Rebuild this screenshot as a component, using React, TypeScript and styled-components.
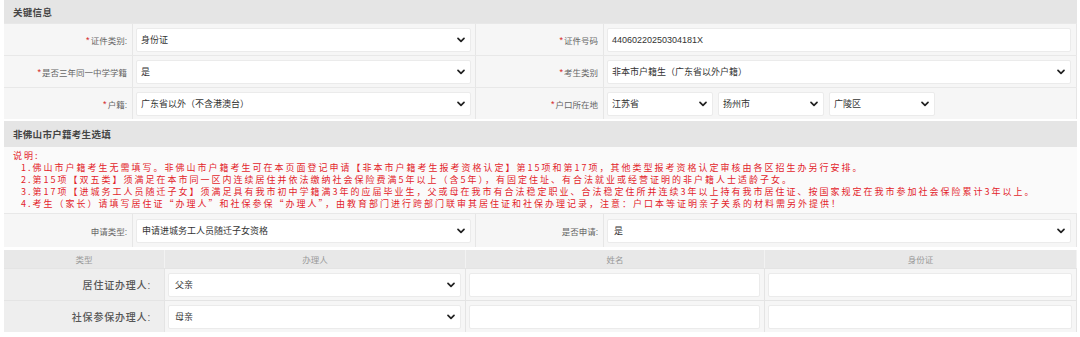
import React from "react";
import styled, { createGlobalStyle } from "styled-components";

const Global = createGlobalStyle`
  html, body { margin: 0; padding: 0; background: #ffffff; }
  body {
    font-family: "Liberation Sans", "Noto Sans CJK SC", sans-serif;
    color: #333;
  }
`;

const Page = styled.div`
  width: 1073px;
  margin-left: 4px;
  display: flex;
  flex-direction: column;
`;

const SectionHeader = styled.div<{ $top?: number; $h?: number }>`
  height: ${(p) => p.$h ?? 23}px;
  margin-top: ${(p) => p.$top ?? 0}px;
  background: #e5e5e5;
  display: flex;
  align-items: center;
  padding-left: 9px;
  font-size: 9.5px;
  font-weight: 700;
  color: #444;
  letter-spacing: 0.3px;
`;

const FormRow = styled.div<{ $h?: number }>`
  display: grid;
  grid-template-columns: 129px 343px 128px 1fr;
  box-sizing: border-box;
  height: ${(p) => p.$h ?? 32}px;
  background: #f6f6f6;
  border-top: 1px solid #e8e8e8;
`;

const LabelCell = styled.div`
  display: flex;
  align-items: center;
  justify-content: flex-end;
  padding-right: 5px;
  font-size: 8.5px;
  color: #666;
  border-right: 1px solid #e6e6e6;
  white-space: nowrap;
`;

const Req = styled.span`
  color: #d41c1c;
  font-size: 9px;
  margin-right: 1px;
`;

const FieldCell = styled.div<{ $pr?: number }>`
  display: flex;
  align-items: center;
  gap: 5px;
  padding: 0 ${(p) => p.$pr ?? 4}px 0 3px;
  border-right: 1px solid #e6e6e6;
`;

const Box = styled.div<{ $w?: number; $pl?: number }>`
  height: 24px;
  box-sizing: border-box;
  ${(p) => (p.$w ? `width: ${p.$w}px; flex: none;` : "flex: 1;")}
  background: #ffffff;
  border: 1px solid #ebebeb;
  border-radius: 2px;
  display: flex;
  align-items: center;
  padding: 0 5px 0 ${(p) => p.$pl ?? 4}px;
  font-size: 9px;
  color: #333;
  white-space: nowrap;
  overflow: hidden;
`;

const BoxText = styled.span`
  flex: 1;
`;

const Chevron = () => (
  <svg width="8" height="6" viewBox="0 0 8 6" style={{ flex: "none" }}>
    <polyline points="1,1.3 4,4.3 7,1.3" fill="none" stroke="#222" strokeWidth="1.7" strokeLinecap="round" strokeLinejoin="round" />
  </svg>
);

const Select: React.FC<{ value: string; w?: number; pl?: number }> = ({ value, w, pl }) => (
  <Box $w={w} $pl={pl}>
    <BoxText>{value}</BoxText>
    <Chevron />
  </Box>
);

const Notes = styled.div`
  height: 66px;
  box-sizing: border-box;
  padding: 3px 0 0 9px;
  background: #fafafa;
  color: #e3242b;
  font-family: "Noto Sans CJK SC", sans-serif;
  font-size: 9px;
  line-height: 12px;
  letter-spacing: 2px;
  white-space: nowrap;
`;

const NoteLine = styled.div<{ $indent?: boolean }>`
  padding-left: ${(p) => (p.$indent ? 8 : 0)}px;
`;

const Gap = styled.div`
  height: 3px;
  background: #ffffff;
`;

const Table = styled.div`
  display: grid;
  grid-template-columns: 161px 301px 299px 1fr;
`;

const TH = styled.div`
  height: 18px;
  background: #e8e8e8;
  display: flex;
  align-items: center;
  justify-content: center;
  font-size: 8.5px;
  color: #999;
  border-right: 1px solid #f2f2f2;
`;

const TLabel = styled.div`
  box-sizing: border-box;
  height: 32px;
  background: #eeeeee;
  border-top: 1px solid #e4e4e4;
  display: flex;
  align-items: center;
  justify-content: flex-end;
  padding-right: 13px;
  font-size: 10px;
  font-weight: 500;
  color: #555;
  letter-spacing: 0.8px;
  border-right: 1px solid #e4e4e4;
`;

const TCell = styled.div`
  box-sizing: border-box;
  height: 32px;
  background: #f6f6f6;
  border-top: 1px solid #e4e4e4;
  border-right: 1px solid #e4e4e4;
  display: flex;
  align-items: center;
  padding: 0 4px 0 3px;
`;

export default function App() {
  return (
    <>
      <Global />
      <Page>
        <SectionHeader>关键信息</SectionHeader>
        <FormRow>
          <LabelCell><Req>*</Req>证件类别:</LabelCell>
          <FieldCell><Select value="身份证" /></FieldCell>
          <LabelCell><Req>*</Req>证件号码</LabelCell>
          <FieldCell $pr={5}><Box>44060220250304181X</Box></FieldCell>
        </FormRow>
        <FormRow>
          <LabelCell><Req>*</Req>是否三年同一中学学籍</LabelCell>
          <FieldCell><Select value="是" /></FieldCell>
          <LabelCell><Req>*</Req>考生类别</LabelCell>
          <FieldCell $pr={5}><Select value="非本市户籍生（广东省以外户籍）" /></FieldCell>
        </FormRow>
        <FormRow>
          <LabelCell><Req>*</Req>户籍:</LabelCell>
          <FieldCell><Select value="广东省以外（不含港澳台）" /></FieldCell>
          <LabelCell><Req>*</Req>户口所在地</LabelCell>
          <FieldCell $pr={5}>
            <Select value="江苏省" w={106} />
            <Select value="扬州市" w={106} />
            <Select value="广陵区" w={106} />
          </FieldCell>
        </FormRow>
        <SectionHeader $top={2} $h={26}>非佛山市户籍考生选填</SectionHeader>
        <Notes>
          <NoteLine>说明:</NoteLine>
          <NoteLine $indent>1.佛山市户籍考生无需填写。非佛山市户籍考生可在本页面登记申请【非本市户籍考生报考资格认定】第15项和第17项，其他类型报考资格认定审核由各区招生办另行安排。</NoteLine>
          <NoteLine $indent>2.第15项【双五类】须满足在本市同一区内连续居住并依法缴纳社会保险费满5年以上（含5年），有固定住址、有合法就业或经营证明的非户籍人士适龄子女。</NoteLine>
          <NoteLine $indent>3.第17项【进城务工人员随迁子女】须满足具有我市初中学籍满3年的应届毕业生，父或母在我市有合法稳定职业、合法稳定住所并连续3年以上持有我市居住证、按国家规定在我市参加社会保险累计3年以上。</NoteLine>
          <NoteLine $indent>4.考生（家长）请填写居住证“办理人”和社保参保“办理人”，由教育部门进行跨部门联审其居住证和社保办理记录，注意：户口本等证明亲子关系的材料需另外提供！</NoteLine>
        </Notes>
        <FormRow $h={34}>
          <LabelCell>申请类型:</LabelCell>
          <FieldCell><Select value="申请进城务工人员随迁子女资格" pl={5} /></FieldCell>
          <LabelCell>是否申请:</LabelCell>
          <FieldCell $pr={5}><Select value="是" pl={6} /></FieldCell>
        </FormRow>
        <Gap />
        <Table>
          <TH>类型</TH>
          <TH>办理人</TH>
          <TH>姓名</TH>
          <TH>身份证</TH>
          <TLabel>居住证办理人:</TLabel>
          <TCell><Select value="父亲" pl={6} /></TCell>
          <TCell><Box /></TCell>
          <TCell><Box /></TCell>
          <TLabel>社保参保办理人:</TLabel>
          <TCell><Select value="母亲" pl={6} /></TCell>
          <TCell><Box /></TCell>
          <TCell><Box /></TCell>
        </Table>
      </Page>
    </>
  );
}
